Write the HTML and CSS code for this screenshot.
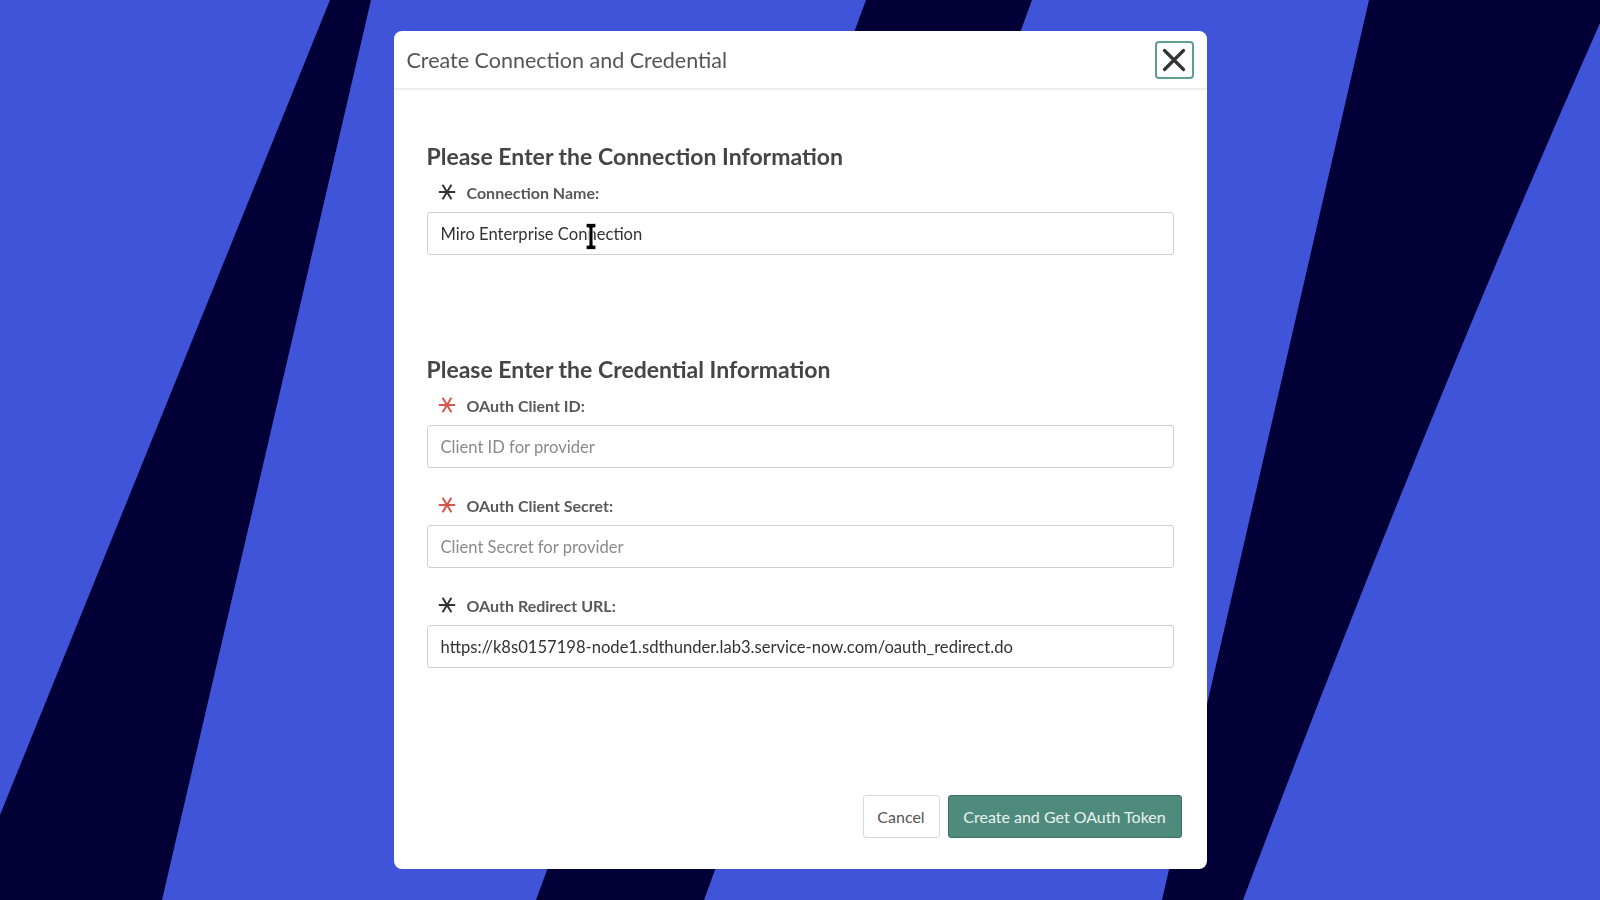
FILE: index.html
```html
<!DOCTYPE html>
<html lang="en">
<head>
<meta charset="utf-8">
<title>Create Connection and Credential</title>
<link rel="stylesheet" href="styles.css">
</head>
<body>
<svg class="backdrop" viewBox="0 0 1600 900" preserveAspectRatio="none" aria-hidden="true">
  <rect width="1600" height="900" fill="#3f54d8"/>
  <polygon points="330,0 371,0 162,900 0,900 0,815" fill="#020036"/>
  <polygon points="866,0 1032,0 704,900 536,900" fill="#020036"/>
  <path d="M1369,0 L1600,0 L1600,23 Q1420,430 1243,900 L1162,900 Z" fill="#020036"/>
</svg>

<div class="stage">
  <section class="dialog" role="dialog" aria-labelledby="dlg-title">
    <header class="dialog-header">
      <h1 id="dlg-title" class="dialog-title">Create Connection and Credential</h1>
      <button class="close-btn" type="button" aria-label="Close">
        <svg width="24" height="24" viewBox="0 0 24 24"><path d="M2.5 2.5 L21.5 21.5 M21.5 2.5 L2.5 21.5" stroke="#333" stroke-width="3.2" stroke-linecap="round" fill="none"/></svg>
      </button>
    </header>

    <div class="dialog-body">
      <h2 class="section-title first">Please Enter the Connection Information</h2>
      <div class="field">
        <label class="field-label">
          <svg class="req" viewBox="0 0 18 16"><path d="M0.8 8 H17.2 M4.6 0.8 L13.4 15.2 M13.4 0.8 L4.6 15.2" stroke="#333" stroke-width="2" fill="none"/></svg>
          <span>Connection Name:</span>
        </label>
        <div class="input-wrap">
          <input class="text-input" type="text" value="Miro Enterprise Connection">
          <svg class="ibeam" viewBox="0 0 12 28" aria-hidden="true"><path d="M1 1.5 Q1 0.5 2 0.5 H10 Q11 0.5 11 1.5 V4 Q11 5 10 5 H8 V23 H10 Q11 23 11 24 V26.5 Q11 27.5 10 27.5 H2 Q1 27.5 1 26.5 V24 Q1 23 2 23 H4 V5 H2 Q1 5 1 4 Z" fill="#000" stroke="#fff" stroke-width="0.8"/></svg>
        </div>
      </div>

      <h2 class="section-title second">Please Enter the Credential Information</h2>
      <div class="field">
        <label class="field-label">
          <svg class="req" viewBox="0 0 18 16"><path d="M0.8 8 H17.2 M4.6 0.8 L13.4 15.2 M13.4 0.8 L4.6 15.2" stroke="#d9534f" stroke-width="2" fill="none"/></svg>
          <span>OAuth Client ID:</span>
        </label>
        <input class="text-input" type="text" placeholder="Client ID for provider">
      </div>
      <div class="field spaced">
        <label class="field-label">
          <svg class="req" viewBox="0 0 18 16"><path d="M0.8 8 H17.2 M4.6 0.8 L13.4 15.2 M13.4 0.8 L4.6 15.2" stroke="#d9534f" stroke-width="2" fill="none"/></svg>
          <span>OAuth Client Secret:</span>
        </label>
        <input class="text-input" type="text" placeholder="Client Secret for provider">
      </div>
      <div class="field spaced">
        <label class="field-label">
          <svg class="req" viewBox="0 0 18 16"><path d="M0.8 8 H17.2 M4.6 0.8 L13.4 15.2 M13.4 0.8 L4.6 15.2" stroke="#333" stroke-width="2" fill="none"/></svg>
          <span>OAuth Redirect URL:</span>
        </label>
        <input class="text-input" type="text" value="https://k8s0157198-node1.sdthunder.lab3.service-now.com/oauth_redirect.do">
      </div>
    </div>

    <footer class="dialog-footer">
      <button class="btn btn-cancel" type="button">Cancel</button>
      <button class="btn btn-primary" type="button">Create and Get OAuth Token</button>
    </footer>
  </section>
</div>
</body>
</html>
```

FILE: styles.css
```css
html, body {
  margin: 0;
  padding: 0;
  width: 100%;
  height: 100%;
  overflow: hidden;
}

body {
  background: #3f54d8;
  font-family: "Lato", "Liberation Sans", sans-serif;
  color: #444;
}

.backdrop {
  position: fixed;
  inset: 0;
  width: 100%;
  height: 100%;
  z-index: 0;
}

.stage {
  position: relative;
  z-index: 1;
  height: 100vh;
  display: flex;
  align-items: center;
  justify-content: center;
}

.dialog {
  width: 813px;
  height: 838px;
  background: #fff;
  border-radius: 8px;
  display: flex;
  flex-direction: column;
  box-sizing: border-box;
  overflow: hidden;
}

.dialog-header {
  height: 57px;
  border-bottom: 2px solid #eeeeee;
  display: flex;
  align-items: center;
  justify-content: space-between;
  padding: 0 13px;
  flex: none;
}

.dialog-title {
  margin: 0;
  font-size: 21.5px;
  font-weight: 400;
  color: #555;
}

.close-btn {
  width: 39px;
  height: 38px;
  border: 2px solid #5f9d8c;
  border-radius: 4px;
  background: #fff;
  padding: 0;
  display: flex;
  align-items: center;
  justify-content: center;
  box-sizing: border-box;
}

.dialog-body {
  padding: 0 33px;
  flex: none;
}

.section-title {
  margin: 0;
  font-size: 23px;
  line-height: 28px;
  font-weight: 700;
  color: #454545;
}

.section-title.first { margin-top: 52px; }
.section-title.second { margin-top: 100px; }

.field-label {
  display: flex;
  align-items: center;
  height: 20px;
  margin-top: 12px;
  padding-left: 11px;
  font-size: 16px;
  font-weight: 700;
  color: #595959;
}

.field.spaced .field-label { margin-top: 27px; }

.req {
  width: 18px;
  height: 16px;
  margin-right: 11px;
  flex: none;
}

.input-wrap {
  position: relative;
  padding-top: 10px;
}

.text-input {
  display: block;
  width: 100%;
  height: 43px;
  margin-top: 10px;
  box-sizing: border-box;
  border: 1px solid #cfcfcf;
  border-radius: 3px;
  padding: 0 13px;
  font-family: inherit;
  font-size: 16.6px;
  color: #333;
  background: #fff;
  outline: none;
}

.input-wrap .text-input {
  margin-top: 0;
}

.text-input::placeholder {
  color: #8a8a8a;
}

.ibeam {
  position: absolute;
  left: 158px;
  top: 21px;
  width: 12px;
  height: 27px;
}

.dialog-footer {
  margin-top: auto;
  display: flex;
  justify-content: flex-end;
  gap: 8px;
  padding: 0 25px 31px 0;
}

.btn {
  height: 43px;
  box-sizing: border-box;
  border-radius: 3px;
  font-family: inherit;
  font-size: 16px;
  padding: 0 10px;
}

.btn-cancel {
  width: 77px;
  background: #fff;
  border: 1px solid #d8d8d8;
  color: #555;
}

.btn-primary {
  width: 234px;
  background: #4f8b7d;
  border: 1px solid #3d6f63;
  color: #e9f2ef;
}
```
